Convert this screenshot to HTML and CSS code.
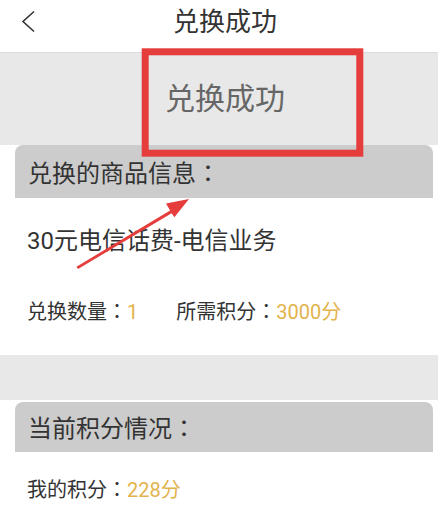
FILE: index.html
```html
<!DOCTYPE html>
<html lang="zh-CN">
<head>
<meta charset="utf-8">
<title>兑换成功</title>
<link rel="stylesheet" href="styles.css">
</head>
<body>
<div class="page">
  <header class="topbar">
    <svg class="back" width="16" height="24" viewBox="0 0 16 24"><polyline points="13,1.5 2,11.5 13,21.5" fill="none" stroke="#333" stroke-width="1.6" stroke-linejoin="miter"/></svg>
    <h1 class="title">兑换成功</h1>
  </header>
  <section class="band band-top"><span class="band-text">兑换成功</span></section>
  <section class="card">
    <div class="card-head">兑换的商品信息<span class="colon" lang="ja">：</span></div>
    <div class="card-body">
      <div class="product">30元电信话费-电信业务</div>
      <div class="row">
        <span class="field">兑换数量<span class="colon" lang="ja">：</span><span class="val">1</span></span>
        <span class="field field-2">所需积分<span class="colon" lang="ja">：</span><span class="val">3000分</span></span>
      </div>
    </div>
  </section>
  <section class="band band-mid"></section>
  <section class="card card-2">
    <div class="card-head">当前积分情况<span class="colon" lang="ja">：</span></div>
    <div class="card-body body-2">
      <div class="row">
        <span class="field">我的积分<span class="colon" lang="ja">：</span><span class="val">228分</span></span>
      </div>
    </div>
  </section>
</div>
<svg class="annot" width="446" height="505" viewBox="0 0 446 505">
  <rect x="145.2" y="51.8" width="214.6" height="101.4" fill="none" stroke="#e53c3c" stroke-width="7"/>
  <polygon points="76.5,266.8 170.1,210.4 166.0,203.6 189,199 174.4,217.2 171.6,213.2 78.0,269.0" fill="#e53c3c"/>
</svg>
</body>
</html>
```
FILE: styles.css
```css
* { box-sizing: border-box; margin: 0; padding: 0; }
html, body { background: #fff; }
body {
  width: 446px;
  height: 505px;
  overflow: hidden;
  position: relative;
  font-family: Roboto, "Noto Sans CJK SC", sans-serif;
  color: #333;
}
.page { width: 438px; }
.topbar {
  height: 53px;
  border-bottom: 1px solid #dcdcdc;
  display: flex;
  align-items: flex-start;
}
.back {
  margin: 10px 0 0 21px;
  flex: none;
}
.title {
  flex: 1;
  text-align: center;
  font-weight: normal;
  font-size: 26px;
  line-height: 44px;
  padding-right: 25px;
  color: #333;
}
.colon { font-family: "Noto Sans CJK JP", "Noto Sans CJK TC", sans-serif; }
.band { background: #e8e8e8; }
.band-top {
  height: 92px;
  display: flex;
  align-items: center;
  justify-content: center;
  padding-left: 12px;
}
.band-text { font-size: 30px; color: #666; line-height: 1; }
.card-head {
  margin: 0 5px 0 15px;
  height: 53px;
  line-height: 53px;
  background: #cccccc;
  border-radius: 8px 8px 0 0;
  padding-left: 13px;
  font-size: 24px;
  color: #333;
  overflow: hidden;
}
.card-2 { margin-top: 2px; }
.card-2 .card-head { height: 50px; line-height: 50px; }
.card-body { padding: 28px 0 32px 27px; }
.product { font-size: 24px; line-height: 30px; }
.row {
  margin-top: 43px;
  font-size: 20px;
  line-height: 24px;
  height: 24px;
  display: flex;
  align-items: center;
}
.body-2 { padding: 26px 0 0 27px; }
.body-2 .row { margin-top: 0; height: 22px; line-height: 22px; }
.field-2 { margin-left: 38px; }
.val { color: #e2b34c; }
.band-mid { height: 45px; }
.annot {
  position: absolute;
  left: 0;
  top: 0;
  pointer-events: none;
}
```
